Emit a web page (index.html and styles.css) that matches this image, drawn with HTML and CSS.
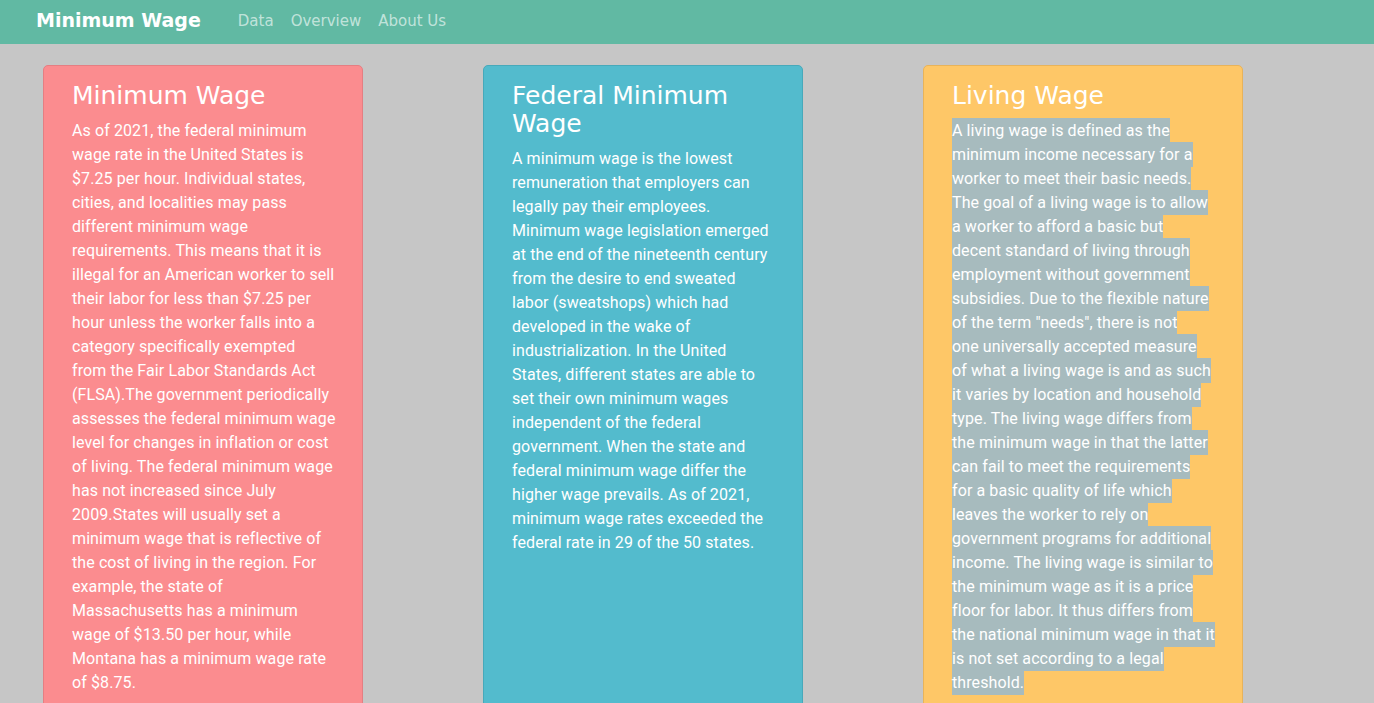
FILE: index.html
```html
<!DOCTYPE html>
<html lang="en">
<head>
<meta charset="utf-8">
<title>Minimum Wage</title>
<link rel="stylesheet" href="styles.css">
</head>
<body>
<nav class="navbar">
  <a class="brand" href="#">Minimum Wage</a>
  <ul class="nav-links">
    <li><a href="#">Data</a></li>
    <li><a href="#">Overview</a></li>
    <li><a href="#">About Us</a></li>
  </ul>
</nav>
<main class="cards">
  <section class="card card-red">
    <h2>Minimum Wage</h2>
    <p>As of 2021, the federal minimum<br>
wage rate in the United States is<br>
$7.25 per hour. Individual states,<br>
cities, and localities may pass<br>
different minimum wage<br>
requirements. This means that it is<br>
illegal for an American worker to sell<br>
their labor for less than $7.25 per<br>
hour unless the worker falls into a<br>
category specifically exempted<br>
from the Fair Labor Standards Act<br>
(FLSA).The government periodically<br>
assesses the federal minimum wage<br>
level for changes in inflation or cost<br>
of living. The federal minimum wage<br>
has not increased since July<br>
2009.States will usually set a<br>
minimum wage that is reflective of<br>
the cost of living in the region. For<br>
example, the state of<br>
Massachusetts has a minimum<br>
wage of $13.50 per hour, while<br>
Montana has a minimum wage rate<br>
of $8.75.</p>
  </section>
  <section class="card card-teal">
    <h2>Federal Minimum Wage</h2>
    <p>A minimum wage is the lowest<br>
remuneration that employers can<br>
legally pay their employees.<br>
Minimum wage legislation emerged<br>
at the end of the nineteenth century<br>
from the desire to end sweated<br>
labor (sweatshops) which had<br>
developed in the wake of<br>
industrialization. In the United<br>
States, different states are able to<br>
set their own minimum wages<br>
independent of the federal<br>
government. When the state and<br>
federal minimum wage differ the<br>
higher wage prevails. As of 2021,<br>
minimum wage rates exceeded the<br>
federal rate in 29 of the 50 states.</p>
  </section>
  <section class="card card-yellow">
    <h2>Living Wage</h2>
    <p><span class="selected">A living wage is defined as the<br>
minimum income necessary for a<br>
worker to meet their basic needs.<br>
The goal of a living wage is to allow<br>
a worker to afford a basic but<br>
decent standard of living through<br>
employment without government<br>
subsidies. Due to the flexible nature<br>
of the term "needs", there is not<br>
one universally accepted measure<br>
of what a living wage is and as such<br>
it varies by location and household<br>
type. The living wage differs from<br>
the minimum wage in that the latter<br>
can fail to meet the requirements<br>
for a basic quality of life which<br>
leaves the worker to rely on<br>
government programs for additional<br>
income. The living wage is similar to<br>
the minimum wage as it is a price<br>
floor for labor. It thus differs from<br>
the national minimum wage in that it<br>
is not set according to a legal<br>
threshold.</span></p>
  </section>
</main>
</body>
</html>
```
FILE: styles.css
```css
* { box-sizing: border-box; }
html, body { margin: 0; padding: 0; }
body {
  background: #c6c6c6;
  font-family: Roboto, "Liberation Sans", sans-serif;
  color: #fff;
  overflow: hidden;
  height: 703px;
}
.navbar {
  height: 44px;
  background: #61b9a3;
  display: flex;
  align-items: center;
  padding: 0 0 4px 36px;
}
.brand {
  font-family: "DejaVu Sans", sans-serif;
  font-weight: bold;
  font-size: 19px;
  color: #fff;
  text-decoration: none;
  margin-right: 37px;
}
.nav-links {
  list-style: none;
  margin: 0;
  padding: 0;
  display: flex;
  gap: 17px;
}
.nav-links a {
  font-family: "DejaVu Sans", sans-serif;
  font-size: 15px;
  color: rgba(255, 255, 255, 0.62);
  text-decoration: none;
}
.cards {
  display: flex;
  gap: 120px;
  padding: 21px 0 0 43px;
  align-items: flex-start;
}
.card {
  width: 320px;
  min-height: 700px;
  border: 1px solid;
  border-radius: 5px;
  padding: 16px 28px;
}
.card h2 {
  font-family: "DejaVu Sans", sans-serif;
  font-weight: normal;
  font-size: 25px;
  line-height: 28px;
  margin: 0 0 9px;
}
.card p {
  font-size: 16px;
  line-height: 24px;
  letter-spacing: 0.1px;
  white-space: nowrap;
  margin: 0;
}
.card-red { background: #fb8c8f; border-color: #e57e82; }
.card-teal { background: #53bbcd; border-color: #47a9ba; }
.card-yellow { background: #fec767; border-color: #e8b35a; }
.selected {
  background: #a7bbbe;
  padding: 3px 0;
}
```
